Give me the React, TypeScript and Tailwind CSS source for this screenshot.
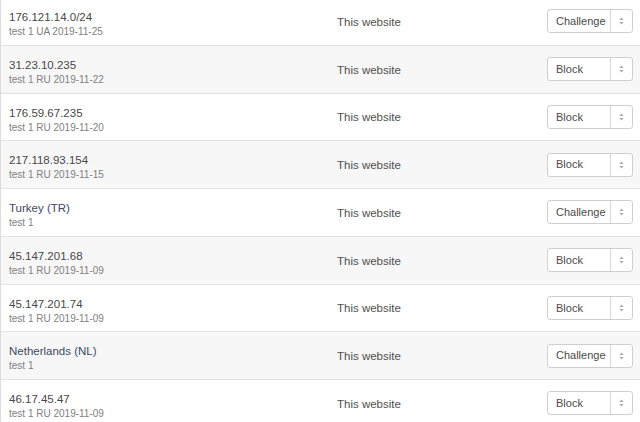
import React from "react";

type Rule = {
  target: string;
  kind: "ip" | "country";
  note: string;
  action: "Challenge" | "Block";
};

const rules: Rule[] = [
  { target: "176.121.14.0/24", kind: "ip", note: "test 1 UA 2019-11-25", action: "Challenge" },
  { target: "31.23.10.235", kind: "ip", note: "test 1 RU 2019-11-22", action: "Block" },
  { target: "176.59.67.235", kind: "ip", note: "test 1 RU 2019-11-20", action: "Block" },
  { target: "217.118.93.154", kind: "ip", note: "test 1 RU 2019-11-15", action: "Block" },
  { target: "Turkey (TR)", kind: "country", note: "test 1", action: "Challenge" },
  { target: "45.147.201.68", kind: "ip", note: "test 1 RU 2019-11-09", action: "Block" },
  { target: "45.147.201.74", kind: "ip", note: "test 1 RU 2019-11-09", action: "Block" },
  { target: "Netherlands (NL)", kind: "country", note: "test 1", action: "Challenge" },
  { target: "46.17.45.47", kind: "ip", note: "test 1 RU 2019-11-09", action: "Block" },
];

function SortArrows() {
  return (
    <svg width="7" height="10" viewBox="0 0 7 10" fill="#a8a8a8">
      <path d="M3.5 1.5 L5.5 4 H1.5 Z" />
      <path d="M3.5 8.5 L5.5 6 H1.5 Z" />
    </svg>
  );
}

function ActionSelect({ value }: { value: string }) {
  return (
    <div className="flex h-6 w-[86px] items-stretch rounded-[3px] border border-[#cfcfcf] bg-white">
      <span className="flex flex-1 items-center pl-2 text-[11px] text-[#4a4a4a]">{value}</span>
      <span className="flex w-[22px] items-center justify-center border-l border-[#d6d6d6]">
        <SortArrows />
      </span>
    </div>
  );
}

export default function App() {
  return (
    <div
      className="h-[422px] w-[640px] overflow-hidden bg-white"
      style={{ fontFamily: '"Liberation Sans", Arial, sans-serif' }}
    >
      <div className="-mt-[2px] border-l border-[#dcdcdc]">
        {rules.map((rule, i) => (
          <div
            key={rule.target + i}
            className={`flex h-[47.75px] items-center border-b border-[#e2e2e2] ${
              i % 2 === 1 ? "bg-[#f7f7f7]" : "bg-white"
            }`}
          >
            <div className="flex w-[336px] flex-col self-start pl-2 pt-[11px]">
              <span
                className={`text-[11.5px] leading-4 ${
                  rule.kind === "country" ? "text-[#3d4861]" : "text-[#484848]"
                }`}
              >
                {rule.target}
              </span>
              <span className="text-[10px] leading-[14px] text-[#808080]">{rule.note}</span>
            </div>
            <div className="flex-1 pt-[2px] text-[11.5px] text-[#4f4f4f]">This website</div>
            <div className="mr-[7px]">
              <ActionSelect value={rule.action} />
            </div>
          </div>
        ))}
      </div>
    </div>
  );
}
